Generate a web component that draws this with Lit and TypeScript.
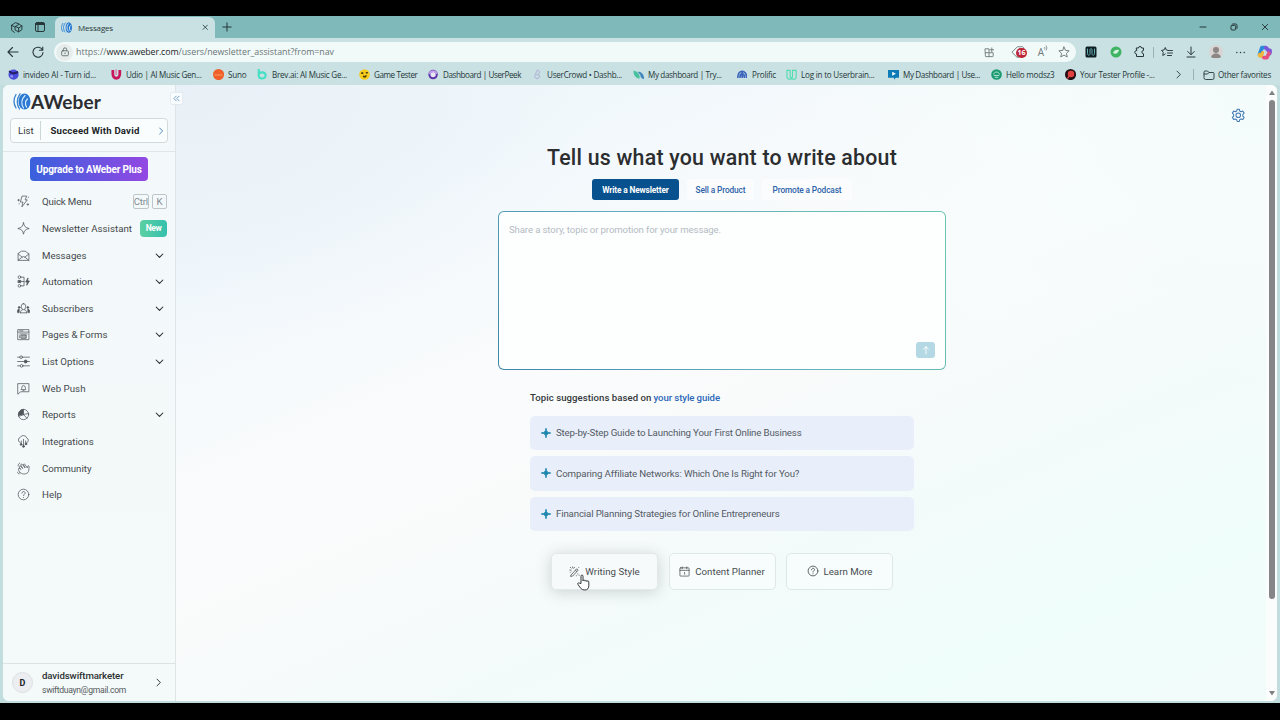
import { LitElement, html, css, svg } from "lit";
import { customElement, property } from "lit/decorators.js";

/* Text set to an exact measure by tracking. */
@customElement("fit-text")
class FitText extends LitElement {
  @property() text = "";
  @property({ type: Number }) w = 0;
  static styles = css`
    :host { display: inline-block; white-space: pre; flex: none; }
  `;
  render() {
    return html`<span>${this.text}</span>`;
  }
  updated() {
    const s = this.renderRoot.querySelector("span") as HTMLElement;
    s.style.letterSpacing = "0px";
    const natural = s.getBoundingClientRect().width;
    s.style.letterSpacing = (this.w - natural) / this.text.length + "px";
  }
}

const icon = (size: number, body: unknown, sw = 1.6, cls = "") => html`<svg
  class="ic ${cls}" width=${size} height=${size} viewBox="0 0 24 24" fill="none"
  stroke="currentColor" stroke-width=${sw} stroke-linecap="round" stroke-linejoin="round">${body}</svg>`;

const glyph = {
  workspaces: svg`<path d="M3 8l7-5 6 2M3 8v9l5 4M3 8l5 2.500M10 10l7-4 5 3v7l-6 4-6-3zM10 10l6 3 6-4M16 13v7"/>`,
  tabs: svg`<rect x="3" y="3" width="18" height="18" rx="3"/><path d="M4 6h16" stroke-width="4"/><path d="M8 7v14"/>`,
  aweber: svg`<path d="M4 3C0 9 0 16 4 21M9.500 2C4 8 4 16 9 22" stroke="#2f86d8"/><ellipse cx="17" cy="12" rx="7" ry="11.500" fill="#2677cd" stroke="none"/><path d="M16 4c-4 4-4 12 0 16M20.500 8c-3 3-3 7-.500 11" stroke="#e4f2fb"/>`,
  close: svg`<path d="M4 4l16 16M20 4L4 20"/>`,
  plus: svg`<path d="M12 2v20M2 12h20"/>`,
  min: svg`<path d="M3 12h18"/>`,
  restore: svg`<rect x="3" y="7" width="14" height="14" rx="3"/><path d="M8 3h9a4 4 0 0 1 4 4v9"/>`,
  back: svg`<path d="M22 12H2M11 3l-9 9 9 9"/>`,
  refresh: svg`<path d="M21 8A10 10 0 1 0 22 13M21.500 2v6.500H15"/>`,
  lock: svg`<rect x="4" y="9" width="16" height="12" rx="2.500"/><path d="M8 9V6a4 4 0 0 1 8 0v3M12 14v2"/>`,
  apps: svg`<path d="M3 4h8v17H4a1 1 0 0 1-1-1zM3 12.500h17V20a1 1 0 0 1-1 1h-8M17 2v8M13 6h8"/>`,
  tag: svg`<path d="M2 12L11 3h9l2 2v7l-9 9h-2z"/><circle cx="15" cy="8" r="1.500"/>`,
  star: svg`<path d="M12 2l3 6.800 7.300.800-5.400 5 1.500 7.300L12 18.200 5.600 21.900l1.500-7.300-5.400-5L9 8.800z"/>`,
  puzzle: svg`<path d="M5 4h4a3 3 0 0 1 6 0h4v5a3.200 3.200 0 0 0 0 6.500V21H5v-5a3.500 3.500 0 0 1 0-7z"/>`,
  favs: svg`<path d="M13 8.500L10.500 8 8.500 3l-2.500 5-5 .800 3.500 3.700L3.500 19l5-3M14 9h9M13 14h10M13 19h8"/>`,
  download: svg`<path d="M12 2v15M5.500 11l6.500 6.500 6.500-6.500M4 22h16"/>`,
  dots: svg`<path d="M4 12h.010M12 12h.010M20 12h.010" stroke-width="3.200"/>`,
  folder: svg`<path d="M2 6a2 2 0 0 1 2-2h5l3 3h8a2 2 0 0 1 2 2v9a3 3 0 0 1-3 3H5a3 3 0 0 1-3-3zM2 10h7l3-3"/>`,
  right: svg`<path d="M8 3l9 9-9 9"/>`,
  down: svg`<path d="M3 8l9 9 9-9"/>`,
  dbl: svg`<path d="M11 4l-8 8 8 8M21 4l-8 8 8 8"/>`,
  quick: svg`<path d="M10 2h8l-3 7h4L9 22l2-9H7zM3 8v3M1.500 9.500h3M4 16v.500M21 4v.500M20 16v3M18.500 17.500h3"/>`,
  spark: svg`<path d="M12 1.500c1 6.500 3.500 9 10.500 10.500C15.500 13.500 13 16 12 22.500 11 16 8.500 13.500 1.500 12 8.500 10.500 11 8 12 1.500z"/>`,
  mail: svg`<path d="M2 9v12h20V9L15 4H9zM2 9l7.500 6M22 9l-7.500 6M2 21l7.500-6q2.500-2 5 0L22 21"/>`,
  auto: svg`<circle cx="4.500" cy="4" r="2.500"/><circle cx="4.500" cy="20" r="2.500"/><rect x="2.500" y="10" width="4.500" height="4" fill="currentColor"/><path d="M8 4h5v16H8M8 12h5"/><path d="M20 6l-4 7h3l-1 6 5-8h-3z" fill="currentColor"/>`,
  people: svg`<path d="M12 3a4 4 0 0 1 4 4v3a4 4 0 0 1-8 0V7a4 4 0 0 1 4-4zM6.500 20v-2c0-2 2-3 3.500-3.500M17.500 20v-2c0-2-2-3-3.500-3.500M6.500 20h11"/><path d="M1 19v-3c0-2 2-3 3-3v6zM23 19v-3c0-2-2-3-3-3v6z" fill="currentColor"/><circle cx="4" cy="10" r="1.600" fill="currentColor"/><circle cx="20" cy="10" r="1.600" fill="currentColor"/>`,
  form: svg`<rect x="2" y="3" width="20" height="18.500"/><path d="M2 7.500h20M5 5.300h6M5 11h14M5 14v4"/><rect x="8" y="13" width="9" height="6" fill="currentColor" fill-opacity=".45"/>`,
  sliders: svg`<path d="M1 4h4M10 4h13M1 12h12M19 12h4M1 20h5M11 20h12"/><circle cx="7.500" cy="4" r="2.500"/><circle cx="16" cy="12" r="2.800" fill="currentColor"/><circle cx="8.500" cy="20" r="2.500"/>`,
  push: svg`<path d="M2 3h20v15H7l-5 4z"/><path d="M8 13.500c2-2 0-7 4-7s3 5 4 7zM11 16h2"/>`,
  pie: svg`<circle cx="12" cy="12" r="9.500"/><path d="M12 12V2.500A9.500 9.500 0 0 0 3 14.500z" fill="currentColor"/><path d="M12 12l6.500 7M12 12l9.500-2"/>`,
  cloud: svg`<path d="M6 14a5 5 0 0 1 0-9.500 6.500 6.500 0 0 1 12 1A4.500 4.500 0 0 1 18 14M8 11v6M16 11v5M12 8v12"/><circle cx="12" cy="21" r="1.800" fill="currentColor"/><circle cx="7.500" cy="17.500" r="1.600" fill="currentColor"/><circle cx="16.500" cy="16.500" r="1.600" fill="currentColor"/>`,
  hand: svg`<path d="M5 19C2 15 2 12 4 11l3 3-3-5c0-2 2-2 3-1l3.500 4L7 5.500c0-2 2-2 3-1l5 6.500-3-6c0-2 2-2 3 0l4 6 .500-3c1-2 3-1 3 1-1 5 0 8-3 11-4 3-10 3-14.500-1zM2 7c0-2 1-4 3-5M1 19c0 1 1 3 3 3"/>`,
  help: svg`<circle cx="12" cy="12" r="9.800"/><path d="M9 9.500c0-4 6-4 6-.300 0 2.300-3 2.300-3 4.800M12 17.300v.200"/>`,
  wand: svg`<path d="M5 19L17 6l3 3L8 22l-4 .500zM14 9l3 3M2 9h2.500M8 2v2M3 3l1.500 1.500M12 3l-1.500 2M3 14l1-1M19 17v.500M22 20v.500M16 21v.500M21 3l.500.500"/>`,
  cal: svg`<rect x="2" y="4" width="20" height="18" rx="1.500"/><path d="M2 9.500h20M7 2v4M17 2v4M12 14l.500 4"/>`,
  gear: svg`<path d="M10.300 2h3.400l.800 3 2 1.100 3-1.200 2.200 3.600-2.100 2.200v2.600l2.100 2.200-2.200 3.600-3-.900-2 1.100-.800 3h-3.400l-.900-3-2-1.100-3 .900-2.200-3.600 2.200-2.200v-2.600L2.200 8.500l2.200-3.600 3 1.200 2-1.100z"/><circle cx="12" cy="12" r="3.800"/>`,
  up: svg`<path d="M12 21V4M6 10l6-6 6 6"/>`,
};

const marks: [string, number, number, number, unknown][] = [
  ["invideo AI - Turn id...", 73, 103, 15, svg`<circle cx="12" cy="12" r="11" fill="#4a4ddb" stroke="none"/><path d="M4 6c4 4 11 4 16 1" stroke="#27206b" stroke-width="5"/><circle cx="8" cy="16" r="3" fill="#8f8df5" stroke="none"/>`],
  ["Udio | AI Music Gen...", 75.500, 102, 15, svg`<path d="M4 2v9c0 12 15 12 15 0V2" stroke="#c8155c" stroke-width="6" stroke-linecap="butt"/><path d="M11 2v10" stroke="#e54a86" stroke-width="2"/>`],
  ["Suno", 18.500, 44, 15, svg`<circle cx="12" cy="12" r="12" fill="#f0602b" stroke="none"/><path d="M4 13h16" stroke="#ffa362" stroke-width="2"/>`],
  ["Brev.ai: AI Music Ge...", 75, 102, 14, svg`<path d="M4 2v14a8 7 0 1 0 8-8c-4 0-8 2-8 6" stroke="#49dfc5" stroke-width="5"/>`],
  ["Game Tester", 43.500, 69, 15, svg`<circle cx="12" cy="12" r="11.500" fill="#f7cd1c" stroke="none"/><path d="M6 9h2M16 8h2M10 16c2 2 4 1 5-1" stroke="#4c3c10" stroke-width="3.500"/>`],
  ["Dashboard | UserPeek", 78, 104, 15, svg`<circle cx="11" cy="12" r="8" stroke="#5b35a8" stroke-width="4.500" fill="#e9e6f6"/><path d="M4 9a8 8 0 0 1 14 0" stroke="#c5a0ee" stroke-width="4"/>`],
  ["UserCrowd • Dashb...", 75, 101, 14, svg`<path d="M8 11l5-9 5 5-3 5 3 6-6 5-6-5zM8 11l5 3" stroke="#b4b9d8" stroke-width="2.400"/>`],
  ["My dashboard | Try...", 73.500, 104, 15, svg`<path d="M1 3c0 11 4 15 13 18 2-9-4-16-13-18z" fill="#49c1a0" stroke="none"/><path d="M10 6c9 0 14 5 14 16-6-1-8-4-8-9z" fill="#4288bd" stroke="none"/>`],
  ["Prolific", 24, 49, 14, svg`<path d="M2 19c0-18 20-18 20 0M7 19c0-10 10-10 10 0M12 7v12" stroke="#3b65bd" stroke-width="4"/>`],
  ["Log in to Userbrain...", 73.500, 102, 15, svg`<path d="M2 3h7v14c0 3 5 3 5 0V3h8v14c0 7-8 6-9 3-3 3-11 3-11-3z" stroke="#55dcb1" stroke-width="2.500"/>`],
  ["My Dashboard | Use...", 77, 103, 15, svg`<path d="M0 2h24v17h-7l-4 4v-4H0z" fill="#0d7bb5" stroke="none"/><path d="M9 6l8 4.500-8 4z" fill="#fff" stroke="none"/>`],
  ["Hello modsz3", 48.500, 74, 15, svg`<circle cx="12" cy="12" r="11.500" fill="#1b9b72" stroke="none"/><path d="M6 11c0-6 12-6 12 0M7 14h10M9 18h6" stroke="#bfe8d9" stroke-width="2"/>`],
  ["Your Tester Profile -...", 74.500, 103, 15, svg`<circle cx="12" cy="12" r="12" fill="#241015" stroke="none"/><circle cx="13" cy="11" r="7" fill="#e3413f" stroke="none"/><path d="M6 20l6-10" stroke="#e3413f" stroke-width="3"/>`],
];

const nav: [string, number, unknown, string][] = [
  ["Quick Menu", 49.500, glyph.quick, "keys"],
  ["Newsletter Assistant", 90, glyph.spark, "new"],
  ["Messages", 44.500, glyph.mail, "v"],
  ["Automation", 50.500, glyph.auto, "v"],
  ["Subscribers", 51.500, glyph.people, "v"],
  ["Pages & Forms", 65.500, glyph.form, "v"],
  ["List Options", 52, glyph.sliders, "v"],
  ["Web Push", 43.500, glyph.push, ""],
  ["Reports", 33.700, glyph.pie, "v"],
  ["Integrations", 51.700, glyph.cloud, ""],
  ["Community", 49.500, glyph.hand, ""],
  ["Help", 20, glyph.help, ""],
];

const topics: [string, number][] = [
  ["Step-by-Step Guide to Launching Your First Online Business", 245.500],
  ["Comparing Affiliate Networks: Which One Is Right for You?", 242.500],
  ["Financial Planning Strategies for Online Entrepreneurs", 223.500],
];

@customElement("app-root")
class AppRoot extends LitElement {
  static styles = css`
    :host { display: flex; flex-direction: column; width: 1280px; height: 720px; box-sizing: border-box; padding: 16px 0 17px; background: #000; overflow: hidden; font-family: Roboto, sans-serif; color: #36393c; position: relative; }
    * { box-sizing: border-box; }
    .ic { display: block; flex: none; }
    .row { display: flex; align-items: center; }
    .chrome { font-family: "Open Sans", "Noto Sans", sans-serif; color: #26373a; }
    .strip { height: 22px; background: #80b9b9; padding-left: 4px; }
    .strip .cell { width: 24px; display: flex; justify-content: center; }
    .tab { align-self: flex-end; width: 160px; height: 21px; margin-left: 3px; background: #c9e1e2; border-radius: 6px 6px 0 0; padding: 0 7px 0 6px; font-size: 8px; }
    .tab fit-text { margin-left: 6px; margin-right: auto; }
    .plus { margin-left: 7px; }
    .controls { margin-left: auto; }
    .controls .cell { width: 30.700px; }
    .tools { height: 26px; background: #c9e1e2; padding-top: 2px; }
    .tools .cell { width: 24.500px; display: flex; justify-content: center; flex: none; }
    .nav1 { margin-left: 1px; }
    .address { width: 1022px; height: 20px; margin-left: 4px; border-radius: 10px; background: #f2faf9; padding-left: 2px; font-size: 8.800px; color: #687476; }
    .lock { width: 17px; height: 17px; border-radius: 50%; background: #e6ecec; display: flex; align-items: center; justify-content: center; margin-right: 3px; color: #5a6668; }
    .host { color: #1b2527; }
    .address .acts { margin-left: auto; color: #70797b; }
    .acts .b26 { width: 26px; } .acts .b32 { width: 32px; position: relative; } .acts .b18 { width: 18px; font-size: 10px; } .acts .b24 { width: 24px; }
    .badge { position: absolute; left: 14px; top: 3px; width: 11px; height: 10px; border-radius: 5px; background: #bd2537; color: #fff; font: 700 7px/10px "Open Sans", sans-serif; text-align: center; }
    .ext { margin-left: 3px; }
    .sep { width: 1px; height: 11px; background: #9ab3b4; margin: 0 .5px; }
    .avatar { border-radius: 50%; background: #d7d4d3; overflow: hidden; }
    .marks { height: 21px; background: #c9e1e2; padding-left: 8px; font-size: 8.100px; }
    .mark { display: flex; align-items: center; flex: none; }
    .mark .slot { width: 15px; flex: none; }
    .more { margin-left: 6px; } .marks .sep { margin: 0 9px 0 10px; }
    .folder { margin-right: 3px; }
    .frame { flex: 1; display: flex; padding: 0 3px 2px; background: #c2dddd; min-height: 0; }
    .page { flex: 1; display: flex; border-radius: 6px; overflow: hidden; background: #fbfefe; }
    .side { width: 173px; background: linear-gradient(#f3f9fb, #f4faf9); border-right: 1px solid #dce5e7; display: flex; flex-direction: column; flex: none; position: relative; z-index: 1; }
    .collapse { position: absolute; left: 167px; top: 7px; width: 13px; height: 13px; border-radius: 2px; background: #f9fdff; border: 1px solid #e3ebf0; color: #3c78ad; display: flex; align-items: center; justify-content: center; }
    .logo { height: 33px; padding: 0 0 0 10px; }
    .logo fit-text { font: 700 19px/22px Lato, sans-serif; color: #2b2d31; }
    .list { margin: 0 7px; height: 25px; border: 1px solid #d2dadd; border-radius: 4px; background: #fafdfd; font-size: 9.600px; padding: 0 2px 0 7px; }
    .list .lsep { width: 1px; height: 19px; background: #ccd5d7; margin: 0 10px 0 6px; }
    .list b { font-weight: 700; color: #222629; }
    .list .ic { margin-left: auto; color: #3477ad; }
    .rule { border-top: 1px solid #dfe6e8; margin: 8px 0 5px; }
    .upgrade { margin: 0 27px; height: 24px; border-radius: 4px; background: linear-gradient(90deg, #3961dd, #9348e3); color: #fff; font-weight: 700; font-size: 10px; display: flex; align-items: center; justify-content: center; flex: none; }
    .menu { margin-top: 7.500px; }
    .item { height: 26.640px; display: flex; align-items: center; padding: 0 8px 0 13px; font-size: 9.700px; color: #44484c; }
    .item > .ic { margin: 0 12.500px 0 .5px; color: #51565c; }
    .end { margin-left: auto; display: flex; gap: 3px; align-items: center; }
    .chev { margin-right: 3px; color: #26292d; }
    .key { height: 15px; line-height: 13px; border: 1px solid #bfc6ca; border-radius: 2px; text-align: center; color: #858c92; }
    .key.a { width: 16.500px; } .key.b { width: 15px; }
    .new { width: 27px; height: 17px; border-radius: 4px; background: linear-gradient(90deg, #5bd0a2, #35c0ae); color: #fff; font-weight: 700; font-size: 8.500px; display: flex; align-items: center; justify-content: center; }
    .user { margin-top: auto; height: 38px; border-top: 1px solid #dbe3e5; padding: 0 12px 0 9px; }
    .disc { width: 21px; height: 21px; border-radius: 50%; background: #eceef1; border: 1px solid #dcdfe3; font-size: 9px; font-weight: 700; color: #202327; display: flex; align-items: center; justify-content: center; margin-right: 9px; }
    .who { display: flex; flex-direction: column; gap: 4px; font-size: 8.600px; line-height: 11px; color: #55595d; }
    .who .n { font-weight: 500; font-size: 9.700px; color: #2c3033; }
    .user .ic { margin-left: auto; color: #35393d; }
    .main { flex: 1; position: relative; display: flex; flex-direction: column; align-items: center; padding-left: 2px; background: radial-gradient(ellipse 420px 260px at 0 0, rgba(232,239,246,.9) 0, rgba(232,239,246,0) 100%), radial-gradient(ellipse 500px 420px at 100% 0, #f4fcfb 0, rgba(244,252,251,0) 100%), linear-gradient(157deg, #eef5fa 0, #f1f8fc 18%, #fafbfc 41%, #f9fbfb 52%, #f3fbfa 68%, #f0fefb 84%, #f2fcfa 100%); }
    .gear { position: absolute; right: 21px; top: 23px; color: #3f78b2; }
    .title { margin: 58px 0 0; height: 30px; font-weight: 500; font-size: 21.300px; line-height: 30px; color: #2b2d2f; }
    .pills { display: flex; gap: 8px; margin-top: 6px; height: 21px; }
    .pill { border-radius: 3px; background: #fbfcfd; color: #2d62a8; font-weight: 500; font-size: 8.300px; display: flex; align-items: center; justify-content: center; }
    .p0 { width: 87px; background: #07528e; color: #fff; font-weight: 700; } .p1 { width: 67px; } .p2 { width: 90px; }
    .box { width: 448px; height: 159px; margin-top: 11px; border: 1px solid transparent; border-radius: 6px; background: linear-gradient(#fdfefe, #fdfefe) padding-box, linear-gradient(50deg, #3d86a8, #62aebf 45%, #6cc5b0) border-box; padding: 10px 10px 11px; display: flex; flex-direction: column; justify-content: space-between; font-size: 9.600px; line-height: 15px; color: #b4bcc4; }
    .send { align-self: flex-end; width: 19px; height: 16px; border-radius: 3px; background: #b5d9e4; color: #fff; display: flex; align-items: center; justify-content: center; }
    .topics { width: 384px; margin-top: 19px; display: flex; flex-direction: column; gap: 6px; }
    .lead { height: 16px; margin-bottom: 4.500px; font-size: 9.600px; font-weight: 500; color: #34383b; gap: 2px; }
    .lead .lk { color: #2c67b8; }
    .topic { height: 34.600px; border-radius: 5px; background: #e9effa; padding-left: 10px; font-size: 9.700px; color: #535a62; gap: 4px; }
    .topic .ic { color: #1b87ac; }
    .btns { display: flex; gap: 10.500px; margin-top: 21.500px; }
    .btn { width: 107px; height: 37px; border: 1px solid #dfe8e9; border-radius: 5px; background: rgba(250,253,253,.6); display: flex; align-items: center; justify-content: center; gap: 5px; font-size: 9.700px; color: #474c50; }
    .btn.hov { background: #f7fafb; box-shadow: 0 2px 15px rgba(70,80,85,.24); border-color: #e3e8ea; }
    .hand { position: absolute; left: 401px; top: 489px; }
    .scroll { width: 11px; background: #fbfdfd; display: flex; flex-direction: column; align-items: center; padding: 5px 0 5px 1px; flex: none; color: #7f8082; }
    .thumb { width: 6px; height: 499px; margin-top: 4px; border-radius: 3px; background: #858487; }
    .scroll .dn { margin-top: auto; }
  `;

  end(kind: string) {
    if (kind === "v") return html`<span class="end">${icon(9, glyph.down, 2.8, "chev")}</span>`;
    if (kind === "new") return html`<span class="end"><span class="new"><fit-text text="New" w="15.5"></fit-text></span></span>`;
    if (kind === "keys") return html`<span class="end"><span class="key a"><fit-text text="Ctrl" w="14"></fit-text></span><span class="key b">K</span></span>`;
    return "";
  }

  render() {
    return html`
      <div class="chrome">
        <div class="strip row">
          <span class="cell">${icon(13, glyph.workspaces, 1.8)}</span>
          <span class="cell">${icon(12, glyph.tabs, 2)}</span>
          <div class="tab row">${icon(11, glyph.aweber, 2)}<fit-text text="Messages" w="35"></fit-text>${icon(6.5, glyph.close, 3)}</div>
          <span class="plus">${icon(10, glyph.plus, 2.4)}</span>
          <div class="controls row">
            <span class="cell">${icon(8, glyph.min, 3)}</span>
            <span class="cell">${icon(8, glyph.restore, 3)}</span>
            <span class="cell">${icon(8, glyph.close, 2.8)}</span>
          </div>
        </div>
        <div class="tools row">
          <span class="cell nav1">${icon(12, glyph.back, 2.2)}</span>
          <span class="cell">${icon(12, glyph.refresh, 2.2)}</span>
          <div class="address row">
            <span class="lock">${icon(10, glyph.lock, 2)}</span>
            <fit-text text="https://" w="30.5"></fit-text><fit-text class="host" text="www.aweber.com" w="72"></fit-text><fit-text text="/users/newsletter_assistant?from=nav" w="155.5"></fit-text>
            <div class="acts row">
              <span class="cell b26">${icon(11, glyph.apps, 2)}</span>
              <span class="cell b32">${icon(14, glyph.tag, 1.6)}<span class="badge">16</span></span>
              <span class="cell b18">A<sup><svg class="ic" width="4" height="7" viewBox="0 0 8 14" fill="none" stroke="currentColor" stroke-width="1.5"><path d="M1 4q2 2 0 5M4 1q4 5 0 10"/></svg></sup></span>
              <span class="cell b24">${icon(12, glyph.star, 1.9)}</span>
            </div>
          </div>
          <div class="ext row">
            <span class="cell">${icon(12, svg`<rect x="1" y="1" width="22" height="22" rx="3" fill="#0e1d22" stroke="none"/><path d="M5 6v9c0 5 5 4 5 0V7c0-2 4-2 4 0v8c0 5 5 4 5 0V6" stroke="#67aeb4"/>`, 2)}</span>
            <span class="cell">${icon(12, svg`<circle cx="12" cy="12" r="11" fill="#3fb564" stroke="none"/><path d="M6 14c2-6 7-7 12-6-2 6-6 10-12 6z" fill="#d9f2e0" stroke="none"/>`)}</span>
            <span class="cell">${icon(12, glyph.puzzle, 2)}</span>
            <span class="sep"></span>
            <span class="cell">${icon(12, glyph.favs, 1.9)}</span>
            <span class="cell">${icon(12, glyph.download, 2)}</span>
            <span class="cell"><svg class="ic avatar" width="14" height="14" viewBox="0 0 14 14" fill="#8c8684"><circle cx="7" cy="5" r="3"/><path d="M2 13c0-6 10-6 10 0z"/></svg></span>
            <span class="cell">${icon(11, glyph.dots)}</span>
            <span class="cell"><svg class="ic" width="15" height="15" viewBox="0 0 24 24" fill="none" stroke-linecap="round" stroke-linejoin="round"><path d="M13 4H8L4 15" stroke="#2b8ad9" stroke-width="6"/><path d="M4 15c-1 2 0 3 3 3l2-6" stroke="#f0b63a" stroke-width="5"/><path d="M14 4c2 0 2 2 3 4h2c3 0 2 4 1 6" stroke="#7b55d9" stroke-width="6"/><path d="M11 20h5l3-7" stroke="#e5517e" stroke-width="6"/></svg></span>
          </div>
        </div>
        <div class="marks row">
          ${marks.map(([t, w, cell, s, g]) => html`<span class="mark" style="width:${cell}px"><span class="slot">${icon(s * 0.74, g)}</span><fit-text text=${t} w=${w}></fit-text></span>`)}
          <span class="more row">${icon(9, glyph.right, 2.4)}<span class="sep"></span>${icon(12, glyph.folder, 1.8, "folder")}<fit-text text="Other favorites" w="53"></fit-text></span>
        </div>
      </div>
      <div class="frame"><div class="page">
        <div class="side">
          <div class="logo row"><svg class="ic" width="18" height="17" viewBox="0 0 18 17" fill="none" stroke-linecap="round"><ellipse cx="11.500" cy="8.500" rx="6" ry="8" fill="#2b79d3"/><path d="M3 1.500Q-1 8.500 3 15M7 .800Q1.800 8.500 6.500 16" stroke="#3885cf" stroke-width="1.300"/><path d="M12 2.500Q6.500 8 10.500 15M14.500 6Q11 9 13.500 14" stroke="#d6ebfb" stroke-width="1.200"/></svg><fit-text text="AWeber" w="70"></fit-text></div>
          <div class="list row"><fit-text text="List" w="15.5"></fit-text><span class="lsep"></span><b><fit-text text="Succeed With David" w="89"></fit-text></b>${icon(8, glyph.right, 2.6)}</div>
          <div class="rule"></div>
          <div class="upgrade"><fit-text text="Upgrade to AWeber Plus" w="105.5"></fit-text></div>
          <div class="menu">${nav.map(([t, w, g, e]) => html`<div class="item">${icon(13, g, 1.4)}<fit-text text=${t} w=${w}></fit-text>${this.end(e)}</div>`)}</div>
          <div class="user row"><span class="disc">D</span><div class="who"><fit-text class="n" text="davidswiftmarketer" w="81.5"></fit-text><fit-text text="swiftduayn@gmail.com" w="84"></fit-text></div>${icon(9, glyph.right, 2.6)}</div>
          <span class="collapse">${icon(7, glyph.dbl, 2.4)}</span>
        </div>
        <div class="main">
          <span class="gear">${icon(14.5, glyph.gear, 1.7)}</span>
          <h1 class="title"><fit-text text="Tell us what you want to write about" w="350"></fit-text></h1>
          <div class="pills">
            <span class="pill p0"><fit-text text="Write a Newsletter" w="66.5"></fit-text></span>
            <span class="pill p1"><fit-text text="Sell a Product" w="50"></fit-text></span>
            <span class="pill p2"><fit-text text="Promote a Podcast" w="69"></fit-text></span>
          </div>
          <div class="box"><fit-text text="Share a story, topic or promotion for your message." w="212"></fit-text><span class="send">${icon(10, glyph.up, 2.2)}</span></div>
          <div class="topics">
            <div class="lead row"><fit-text text="Topic suggestions based on" w="121.5"></fit-text><fit-text class="lk" text="your style guide" w="66.5"></fit-text></div>
            ${topics.map(([t, w]) => html`<div class="topic row"><svg class="ic" width="12" height="12" viewBox="0 0 24 24" fill="currentColor"><path d="M12 2.500c1 7 2.500 8.500 9.500 9.500-7 1-8.500 2.500-9.500 9.500-1-7-2.500-8.500-9.500-9.500 7-1 8.500-2.500 9.500-9.500z" stroke="currentColor" stroke-width="1.800"/></svg><fit-text text=${t} w=${w}></fit-text></div>`)}
          </div>
          <div class="btns">
            <span class="btn hov">${icon(11, glyph.wand, 1.7)}<fit-text text="Writing Style" w="54.5"></fit-text></span>
            <span class="btn">${icon(11, glyph.cal, 1.6)}<fit-text text="Content Planner" w="69.5"></fit-text></span>
            <span class="btn">${icon(12, glyph.help, 1.7)}<fit-text text="Learn More" w="49"></fit-text></span>
          </div>
          <svg class="hand" width="13" height="17" viewBox="0 0 13 17" fill="#fff" stroke="#33383b" stroke-width="1" stroke-linejoin="round"><path d="M4 9.500V2.200c0-1.600 2-1.600 2 0V7c0-1.300 2-1.200 2 .200 0-1.200 1.900-1 1.900.300 0-1 1.900-1 1.900.500v3.500c0 2.500-1 4.500-4 4.500-3.300 0-4.200-1.800-6.800-5.500-.900-1.400.500-2.200 1.500-1.300z"/></svg>
        </div>
        <div class="scroll"><svg class="ic" width="6" height="6" viewBox="0 0 6 6" fill="currentColor"><path d="M3 .500L6 5H0z"/></svg><span class="thumb"></span><svg class="ic dn" width="6" height="6" viewBox="0 0 6 6" fill="currentColor"><path d="M3 5.500L6 1H0z"/></svg></div>
      </div></div>`;
  }
}
